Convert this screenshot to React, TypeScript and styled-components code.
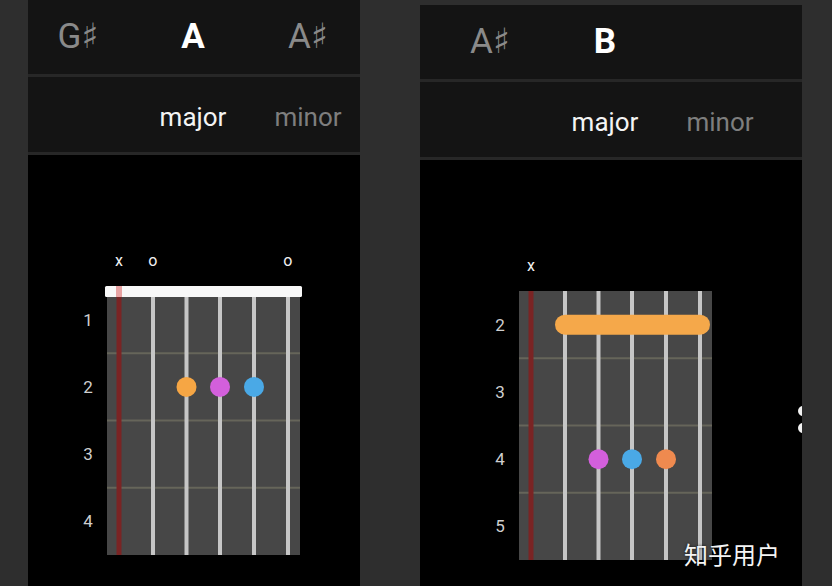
import React from "react";
import styled, { createGlobalStyle } from "styled-components";

const GlobalStyle = createGlobalStyle`
  html, body {
    margin: 0;
    padding: 0;
    background: #2e2e2e;
  }
  body {
    font-family: Roboto, "Noto Sans", "DejaVu Sans", sans-serif;
    overflow: hidden;
  }
`;

const Page = styled.div`
  position: relative;
  display: flex;
  align-items: stretch;
  gap: 60px;
  height: 586px;
  padding-left: 28px;
  box-sizing: border-box;
  overflow: hidden;
`;

const Panel = styled.section<{ $width: number; $offset: number }>`
  position: relative;
  display: flex;
  flex-direction: column;
  width: ${(p) => p.$width}px;
  margin-top: ${(p) => p.$offset}px;
  background: #000;
  overflow: hidden;
  flex-shrink: 0;
`;

const Row = styled.div<{ $height: number; $pad: number }>`
  display: flex;
  align-items: center;
  gap: 15px;
  height: ${(p) => p.$height}px;
  padding-left: ${(p) => p.$pad}px;
  background: #141414;
  flex-shrink: 0;
`;

const Divider = styled.div`
  height: 3px;
  background: #272727;
  flex-shrink: 0;
`;

const KeyCell = styled.div<{ $active?: boolean }>`
  width: 100px;
  text-align: center;
  font-size: 35px;
  line-height: 40px;
  font-weight: ${(p) => (p.$active ? 700 : 400)};
  color: ${(p) => (p.$active ? "#ffffff" : "#8a8a8a")};
`;

const QualityCell = styled.div<{ $active?: boolean }>`
  width: 100px;
  text-align: center;
  font-size: 26px;
  line-height: 32px;
  padding-top: 4px;
  color: ${(p) => (p.$active ? "#f4f4f4" : "#7e7e7e")};
`;

const ChordArea = styled.div`
  position: relative;
  flex: 1;
  background: #000;
`;

const Diagram = styled.div<{ $left: number }>`
  display: grid;
  grid-template-columns: 38px 193px;
  grid-template-rows: 36px 269px;
  margin-top: 95px;
  margin-left: ${(p) => p.$left}px;
`;

const MarkerRow = styled.div`
  grid-column: 2;
  grid-row: 1;
  display: grid;
  grid-template-columns: repeat(6, 33.8px);
  margin-left: -5px;
  align-items: start;
`;

const Marker = styled.span`
  text-align: center;
  font-size: 16px;
  line-height: 22px;
  color: #f0f0f0;
`;

const FretLabels = styled.div`
  grid-column: 1;
  grid-row: 2;
  display: grid;
  grid-template-rows: repeat(4, 1fr);
`;

const FretLabel = styled.span`
  display: flex;
  align-items: center;
  justify-content: center;
  font-size: 17px;
  color: #cfcfcf;
`;

const BoardSvg = styled.svg`
  grid-column: 2;
  grid-row: 2;
  display: block;
  overflow: visible;
`;

const MoreDots = styled.div`
  position: absolute;
  right: -6px;
  top: 246px;
  display: flex;
  flex-direction: column;
  gap: 7px;
`;

const Dot = styled.span`
  width: 10px;
  height: 10px;
  border-radius: 50%;
  background: #f2f2f2;
`;

const Watermark = styled.div`
  position: absolute;
  left: 684px;
  top: 539px;
  font-family: "Noto Sans CJK SC", "Noto Sans", sans-serif;
  font-size: 24px;
  line-height: 30px;
  color: #f4f4f4;
  text-shadow: 0 0 3px rgba(0, 0, 0, 0.8);
`;

const STRING_X = [12, 46, 79.5, 113, 147, 181];
const FRET_H = 67.25;
const BOARD_W = 193;
const BOARD_H = 269;

type Fing = { string: number; fret: number; color: string };

type Chord = {
  keys: string[];
  activeKey: number;
  width: number;
  offset: number;
  pad: number;
  markers: string[];
  startFret: number;
  nut: boolean;
  dots: Fing[];
  barre?: { fret: number; from: number; to: number; color: string };
  more?: boolean;
};

const chords: Chord[] = [
  {
    keys: ["G♯", "A", "A♯"],
    activeKey: 1,
    width: 332,
    offset: 0,
    pad: 0,
    markers: ["x", "o", "", "", "", "o"],
    startFret: 1,
    nut: true,
    dots: [
      { string: 2, fret: 2, color: "#f6a644" },
      { string: 3, fret: 2, color: "#d35fdc" },
      { string: 4, fret: 2, color: "#4aa9e6" },
    ],
  },
  {
    keys: ["A♯", "B", ""],
    activeKey: 1,
    width: 382,
    offset: 5,
    pad: 20,
    markers: ["x", "", "", "", "", ""],
    startFret: 2,
    nut: false,
    dots: [
      { string: 2, fret: 4, color: "#d35fdc" },
      { string: 3, fret: 4, color: "#4aa9e6" },
      { string: 4, fret: 4, color: "#ef8a4f" },
    ],
    barre: { fret: 2, from: 1, to: 5, color: "#f5a84a" },
    more: true,
  },
];

function Board({ chord }: { chord: Chord }) {
  const cy = (fret: number) => (fret - chord.startFret + 0.5) * FRET_H;
  return (
    <BoardSvg width={BOARD_W} height={BOARD_H} viewBox={`0 0 ${BOARD_W} ${BOARD_H}`}>
      <rect x={0} y={0} width={BOARD_W} height={BOARD_H} fill="#474747" />
      {[1, 2, 3].map((i) => (
        <rect key={i} x={0} y={i * FRET_H - 1} width={BOARD_W} height={2} fill="#66655a" />
      ))}
      {STRING_X.map((x, i) =>
        i === 0 ? (
          <rect key={i} x={x - 2.5} y={0} width={5} height={BOARD_H} fill="#7a2424" />
        ) : (
          <rect key={i} x={x - 2} y={0} width={4} height={BOARD_H} fill="#c6c6c6" />
        )
      )}
      {chord.nut && (
        <g>
          <rect x={-2} y={0} width={BOARD_W + 4} height={11} rx={1.5} fill="#f8f8f8" />
          <rect x={STRING_X[0] - 3} y={0} width={6} height={11} fill="#e8a3a3" />
        </g>
      )}
      {chord.barre && (
        <rect
          x={STRING_X[chord.barre.from] - 10}
          y={cy(chord.barre.fret) - 10}
          width={STRING_X[chord.barre.to] - STRING_X[chord.barre.from] + 20}
          height={20}
          rx={10}
          fill={chord.barre.color}
        />
      )}
      {chord.dots.map((d, i) => (
        <circle key={i} cx={STRING_X[d.string]} cy={cy(d.fret)} r={10} fill={d.color} />
      ))}
    </BoardSvg>
  );
}

function ChordPanel({ chord }: { chord: Chord }) {
  const frets = [0, 1, 2, 3].map((i) => chord.startFret + i);
  return (
    <Panel $width={chord.width} $offset={chord.offset}>
      <Row $height={74} $pad={chord.pad}>
        {chord.keys.map((k, i) => (
          <KeyCell key={i} $active={i === chord.activeKey}>
            {k}
          </KeyCell>
        ))}
      </Row>
      <Divider />
      <Row $height={75} $pad={chord.pad}>
        <QualityCell />
        <QualityCell $active>major</QualityCell>
        <QualityCell>minor</QualityCell>
      </Row>
      <Divider />
      <ChordArea>
        <Diagram $left={chord.pad + 41}>
          <MarkerRow>
            {chord.markers.map((m, i) => (
              <Marker key={i}>{m}</Marker>
            ))}
          </MarkerRow>
          <FretLabels>
            {frets.map((f) => (
              <FretLabel key={f}>{f}</FretLabel>
            ))}
          </FretLabels>
          <Board chord={chord} />
        </Diagram>
        {chord.more && (
          <MoreDots>
            <Dot />
            <Dot />
          </MoreDots>
        )}
      </ChordArea>
    </Panel>
  );
}

export default function App() {
  return (
    <>
      <GlobalStyle />
      <Page>
        {chords.map((c, i) => (
          <ChordPanel key={i} chord={c} />
        ))}
        <Watermark>知乎用户</Watermark>
      </Page>
    </>
  );
}
